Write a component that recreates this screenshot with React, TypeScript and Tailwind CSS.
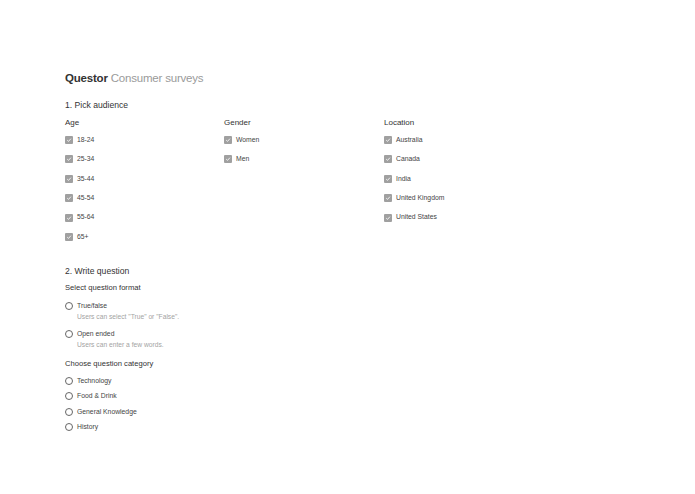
const ages = ["18-24", "25-34", "35-44", "45-54", "55-64", "65+"];
const genders = ["Women", "Men"];
const locations = ["Australia", "Canada", "India", "United Kingdom", "United States"];
const formats = [
  { label: "True/false", hint: 'Users can select "True" or "False".' },
  { label: "Open ended", hint: "Users can enter a few words." },
];
const categories = ["Technology", "Food & Drink", "General Knowledge", "History"];

function Checkbox({ label }: { label: string }) {
  return (
    <label className="flex h-[19.4px] items-center gap-[4px] text-[6.8px] text-[#444]">
      <span className="flex h-[8px] w-[8px] items-center justify-center rounded-[1px] bg-[#a0a0a0]">
        <svg viewBox="0 0 10 10" className="h-[6px] w-[6px]">
          <path d="M2 5.2 L4.2 7.3 L8.2 2.8" fill="none" stroke="#fff" strokeWidth="1.4" />
        </svg>
      </span>
      {label}
    </label>
  );
}

function Radio({ label }: { label: string }) {
  return (
    <label className="flex h-[12px] items-center gap-[4px] text-[6.8px] text-[#444]">
      <span className="h-[8px] w-[8px] rounded-full border border-[#666]" />
      {label}
    </label>
  );
}

function Column({ title, items }: { title: string; items: string[] }) {
  return (
    <div>
      <div className="h-[12px] text-[8px] leading-[12px] text-[#333]">{title}</div>
      <div className="mt-[1.3px] flex flex-col">
        {items.map((i) => (
          <Checkbox key={i} label={i} />
        ))}
      </div>
    </div>
  );
}

export default function App() {
  return (
    <div
      className="min-h-screen bg-white pl-[65px] pt-[70px]"
      style={{ fontFamily: '"Liberation Sans", Arial, sans-serif' }}
    >
      <h1 className="text-[11.5px] leading-[16px] tracking-[-0.2px]">
        <span className="font-semibold text-[#333]">Questor</span>{" "}
        <span className="text-[#9a9a9a]">Consumer surveys</span>
      </h1>

      <h2 className="mt-[13px] text-[8.6px] leading-[12px] text-[#333]">1. Pick audience</h2>
      <div className="mt-[6px] grid grid-cols-[159px_160px_1fr]">
        <Column title="Age" items={ages} />
        <Column title="Gender" items={genders} />
        <Column title="Location" items={locations} />
      </div>

      <h2 className="mt-[18.3px] text-[8.6px] leading-[12px] text-[#333]">2. Write question</h2>
      <div className="mt-[5px] text-[7.6px] leading-[12px] text-[#333]">Select question format</div>
      {formats.map((f) => (
        <div key={f.label} className="mt-[6px]">
          <Radio label={f.label} />
          <div className="pl-[12px] text-[6.7px] leading-[10px] text-[#a3a3a3]">{f.hint}</div>
        </div>
      ))}

      <div className="mt-[8px] text-[7.6px] leading-[12px] text-[#333]">Choose question category</div>
      <div className="mt-[3.25px] flex flex-col">
        {categories.map((c) => (
          <div key={c} className="flex h-[15.5px] items-center">
            <Radio label={c} />
          </div>
        ))}
      </div>
    </div>
  );
}
